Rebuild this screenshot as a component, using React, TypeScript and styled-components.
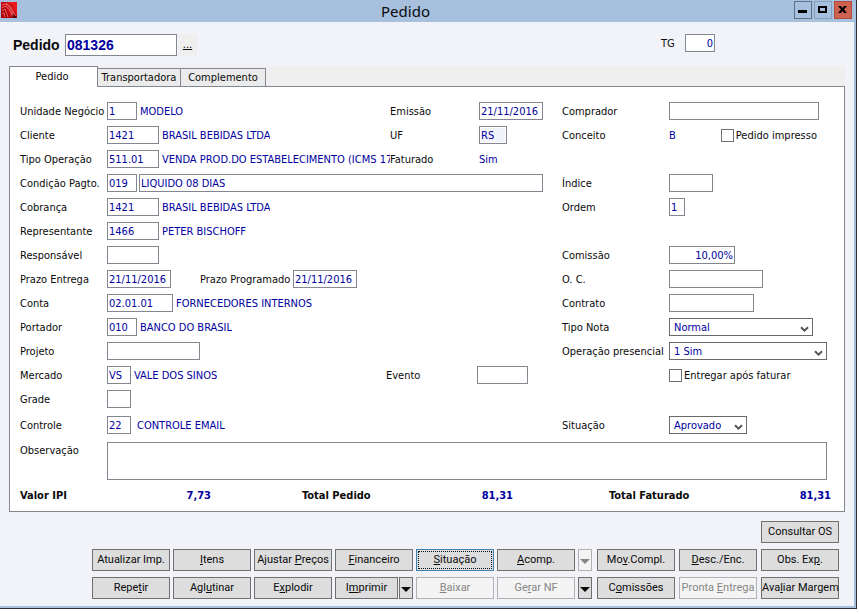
import React from "react";
import styled, { createGlobalStyle, css } from "styled-components";

const INK = "#0a0a0a";
const NAVY = "#0000a0";
const BORDER = "#838790";
const FACE = "#f2f3f9";
const FRAME = "#a6c0dd";
const UI = '"DejaVu Sans Condensed", "Open Sans", sans-serif';

const Global = createGlobalStyle`
  * { box-sizing: border-box; }
  body { margin: 0; background: #fff; color: ${INK}; font: 11px/14px ${UI}; }
  input, select, textarea, button { font: inherit; color: inherit; margin: 0; border-radius: 0; }
`;

const Window = styled.main`
  margin: 0 2px 5px 0;
  background: ${FACE};
  border-right: 1px solid #2e2f3a;
  border-bottom: 1px solid #2e2f3a;
`;
const Frame = styled.div`
  border-right: 2px solid ${FRAME};
  border-bottom: 2px solid ${FRAME};
`;
const TitleBar = styled.header`
  display: flex;
  align-items: flex-start;
  height: 22px;
  padding: 1px 2px 0 0;
  background: ${FRAME};
`;
const AppIcon = styled.svg`
  display: block;
  width: 16px;
  height: 16px;
  margin: 1px 0 0 1px;
`;
const Title = styled.h1`
  flex: 1;
  margin: 0;
  font: 400 15px/20px "Noto Sans", "Open Sans", sans-serif;
  text-align: center;
`;
const Controls = styled.div`
  display: flex;
  gap: 2px;
`;
const ControlButton = styled.button<{ $edge: string; $fill?: string }>`
  width: 18px;
  height: 18px;
  padding: 0;
  border: 1px solid ${(p) => p.$edge};
  background: ${(p) => p.$fill ?? "transparent"};
  svg { display: block; }
`;

const Body = styled.div`
  padding: 12px 9px 7px 9px;
`;
const Heading = styled.div`
  display: flex;
  align-items: flex-start;
  padding: 0 130px 0 4px;
`;
const HeadingLabel = styled.label`
  width: 52px;
  font: 700 14px/22px "Liberation Sans", sans-serif;
`;
const TgLabel = styled.label`
  margin-left: auto;
  width: 24px;
  line-height: 20px;
`;
const MoreButton = styled.button`
  width: 19px;
  height: 22px;
  margin-left: 1px;
  padding: 0;
  border: 0;
  background: #efefef;
  text-decoration: underline;
`;

const TabStrip = styled.div`
  display: flex;
  align-items: flex-end;
  height: 21px;
  margin-top: 10px;
  background: #efefef;
`;
const Tab = styled.button<{ $active?: boolean; $width: number }>`
  width: ${(p) => p.$width}px;
  height: 19px;
  padding: 1px 0 0;
  border: 1px solid ${BORDER};
  border-left-width: ${(p) => (p.$active ? 1 : 0)}px;
  background: #ebebeb;
  ${(p) =>
    p.$active &&
    css`
      height: 21px;
      padding: 0 3px 0 0;
      border-bottom: 0;
      background: #fff;
    `}
`;
const Panel = styled.section`
  padding: 15px 0 8px 10px;
  border: 1px solid ${BORDER};
  border-top: 0;
  background: #fff;
`;
const PanelTop = styled.div`
  flex: 1;
  align-self: flex-end;
  border-top: 1px solid ${BORDER};
`;

const Rows = styled.div`
  display: flex;
  flex-direction: column;
  gap: 6px;
`;
const Row = styled.div<{ $first?: number; $gap?: number }>`
  display: grid;
  grid-template-columns: ${(p) => p.$first ?? 370}px minmax(0, 1fr) 282px;
  margin-top: ${(p) => p.$gap ?? 0}px;
`;
const Cell = styled.div<{ $span?: number }>`
  display: flex;
  align-items: center;
  min-width: 0;
  height: 18px;
  grid-column: span ${(p) => p.$span ?? 1};
`;
const Label = styled.label<{ $width?: number; $indent?: number }>`
  flex: none;
  width: ${(p) => p.$width ?? 87}px;
  margin-left: ${(p) => p.$indent ?? 0}px;
  padding-top: 2px;
  white-space: nowrap;
`;
const Input = styled.input<{ $width?: number; $tall?: boolean; $right?: boolean }>`
  flex: ${(p) => (p.$width ? "none" : "1")};
  width: ${(p) => p.$width ?? 0}px;
  height: 18px;
  padding: 0 1px;
  border: 1px solid ${BORDER};
  background: #fff;
  color: ${NAVY};
  text-align: ${(p) => (p.$right ? "right" : "left")};
  outline: none;
  &:read-only {
    background: ${FACE};
    box-shadow: inset 0 0 0 1px #fff;
  }
  ${(p) =>
    p.$tall &&
    css`
      height: 22px;
      font: 700 14px/20px "Liberation Sans", sans-serif;
    `}
`;
const LongInput = styled(Input)`
  margin: 0 19px 0 2px;
`;
const Value = styled.output<{ $gap?: number }>`
  margin-left: ${(p) => p.$gap ?? 3}px;
  padding-top: 2px;
  overflow: hidden;
  color: ${NAVY};
  white-space: nowrap;
`;
const Check = styled.label<{ $indent?: number }>`
  display: flex;
  align-items: center;
  gap: 2px;
  margin-left: ${(p) => p.$indent ?? 0}px;
  white-space: nowrap;
  input {
    appearance: none;
    width: 13px;
    height: 13px;
    border: 1px solid #6f6f6f;
    background: #fff;
  }
  span { padding-top: 2px; }
`;
const SelectBox = styled.div<{ $width: number }>`
  display: grid;
  width: ${(p) => p.$width}px;
  select, svg { grid-area: 1 / 1; }
  select {
    appearance: none;
    width: 100%;
    height: 18px;
    padding: 2px 16px 0 4px;
    border: 1px solid #6a6a6a;
    background: #fff;
    color: ${NAVY};
  }
  svg {
    place-self: center end;
    margin: 4px 4px 0 0;
    pointer-events: none;
  }
`;
const NoteRow = styled.div`
  display: flex;
  align-items: flex-start;
  margin-top: 2px;
  padding-right: 17px;
`;
const Note = styled.textarea`
  flex: 1;
  height: 38px;
  border: 1px solid ${BORDER};
  color: ${NAVY};
  resize: none;
`;
const Totals = styled.dl`
  display: grid;
  grid-template-columns: 282fr 307fr 222fr;
  margin: 9px 13px 0 0;
  font-weight: 700;
`;
const Total = styled.div<{ $after?: number }>`
  display: flex;
  justify-content: space-between;
  padding-right: ${(p) => p.$after ?? 0}px;
  dd { margin: 0; color: ${NAVY}; }
`;

const Actions = styled.footer`
  display: flex;
  justify-content: flex-end;
  align-items: flex-end;
  gap: 5px;
  margin-top: 9px;
  padding-right: 6px;
`;
const LeftActions = styled.div`
  display: grid;
  grid-template-columns: repeat(6, 78px) 14px;
  gap: 6px 3px;
`;
const RightActions = styled.div`
  display: grid;
  grid-template-columns: repeat(3, 78px);
  gap: 6px 4px;
`;
const ActionButton = styled.button<{ $focused?: boolean; $column?: number }>`
  height: 22px;
  padding: 0;
  border: 1px solid #707070;
  background: #dddddd;
  font: 11px/18px Roboto, "Liberation Sans", sans-serif;
  white-space: nowrap;
  ${(p) => p.$column && `grid-column: ${p.$column};`}
  &:disabled {
    border-color: #b0b2b5;
    background: #f4f4f4;
    color: #868686;
  }
  ${(p) =>
    p.$focused &&
    css`
      border-color: #3c7fb1;
      outline: 1px dotted #111;
      outline-offset: -3px;
    `}
  svg { display: block; margin: 2px auto 0; }
`;
const Split = styled.div`
  display: grid;
  grid-template-columns: 1fr 14px;
  gap: 1px;
`;

const Chevron = () => (
  <svg width="9" height="7" viewBox="0 0 9 7" aria-hidden="true">
    <path d="M1 1.2 4.5 4.7 8 1.2" fill="none" stroke="#555" strokeWidth="2" />
  </svg>
);
const Arrow = () => (
  <svg width="10" height="5" viewBox="0 0 10 5" aria-hidden="true">
    <path d="M0 0h10L5 5z" fill="currentColor" />
  </svg>
);

type FieldProps = {
  id: string;
  label: string;
  width: number;
  value?: string;
  labelWidth?: number;
  right?: boolean;
  readOnly?: boolean;
};
const Field = ({ id, label, width, value = "", labelWidth, right, readOnly }: FieldProps) => (
  <>
    <Label htmlFor={id} $width={labelWidth}>{label}</Label>
    <Input id={id} $width={width} defaultValue={value} $right={right} readOnly={readOnly} />
  </>
);

const SIDE = 107;
const Choice = ({ id, label, width, options }: { id: string; label: string; width: number; options: string[] }) => (
  <>
    <Label htmlFor={id} $width={SIDE}>{label}</Label>
    <SelectBox $width={width}>
      <select id={id}>{options.map((o) => <option key={o}>{o}</option>)}</select>
      <Chevron />
    </SelectBox>
  </>
);

const Action = ({ text, ...rest }: { text: string; disabled?: boolean; $focused?: boolean; $column?: number }) => {
  const [before, key, after] = text.split("_");
  return (
    <ActionButton type="button" {...rest}>
      {before}{key && <u>{key}</u>}{after}
    </ActionButton>
  );
};

export default function App() {
  return (
    <Window>
      <Global />
      <Frame>
        <TitleBar>
          <AppIcon viewBox="0 0 16 16" aria-hidden="true">
            <path d="M0 0h16v16H0z" fill="#c9070c" />
            <path d="M6 0h10v13L11 3z" fill="#e8191d" />
            <path d="M0 8 4 4l2 5 4 7H0z" fill="#b00208" />
            <path d="M1 3 5 2l4 4 4 8M1 6l4-2 4 5 3 6M5 1l5 4 3 6 2 4M1 9l3-2 3 8M1 12l2-1 1 4" fill="none" stroke="#f7aaa2" strokeWidth=".6" />
            <path d="M12 12l4 3v1h-5z" fill="#5e0004" />
          </AppIcon>
          <Title>Pedido</Title>
          <Controls>
            <ControlButton type="button" aria-label="Minimizar" $edge="#5d7288">
              <svg width="16" height="16" viewBox="0 0 16 16"><path d="M3 8h9v3H3z" /></svg>
            </ControlButton>
            <ControlButton type="button" aria-label="Maximizar" $edge="#86a0ba">
              <svg width="16" height="16" viewBox="0 0 16 16"><path d="M3 4h9v7H3zM5 6v3h5V6z" fillRule="evenodd" /></svg>
            </ControlButton>
            <ControlButton type="button" aria-label="Fechar" $edge="#b5483c" $fill="#cd6250">
              <svg width="16" height="16" viewBox="0 0 16 16"><path d="M3 4h3l1.500 2L9 4h3L9 7.500l3 3.500H9L7.500 9 6 11H3l3-3.500z" /></svg>
            </ControlButton>
          </Controls>
        </TitleBar>
        <Body>
          <Heading>
            <HeadingLabel htmlFor="numero">Pedido</HeadingLabel>
            <Input id="numero" $width={112} $tall defaultValue="081326" />
            <MoreButton type="button">...</MoreButton>
            <TgLabel htmlFor="tg">TG</TgLabel>
            <Input id="tg" $width={30} $right defaultValue="0" />
          </Heading>
          <TabStrip role="tablist">
            <Tab type="button" role="tab" aria-selected $active $width={89}>Pedido</Tab>
            <Tab type="button" role="tab" $width={83}>Transportadora</Tab>
            <Tab type="button" role="tab" $width={85}>Complemento</Tab>
            <PanelTop />
          </TabStrip>
          <Panel>
            <Rows>
              <Row>
                <Cell><Field id="unidade" label="Unidade Negócio" width={30} value="1" /><Value>MODELO</Value></Cell>
                <Cell><Field id="emissao" label="Emissão" labelWidth={89} width={64} value="21/11/2016" /></Cell>
                <Cell><Field id="comprador" label="Comprador" labelWidth={SIDE} width={150} /></Cell>
              </Row>
              <Row>
                <Cell><Field id="cliente" label="Cliente" width={52} value="1421" /><Value>BRASIL BEBIDAS LTDA</Value></Cell>
                <Cell><Field id="uf" label="UF" labelWidth={89} width={28} value="RS" readOnly /></Cell>
                <Cell>
                  <Label as="span" $width={SIDE}>Conceito</Label><Value $gap={0}>B</Value>
                  <Check $indent={45}><input type="checkbox" /><span>Pedido impresso</span></Check>
                </Cell>
              </Row>
              <Row>
                <Cell><Field id="tipo" label="Tipo Operação" width={52} value="511.01" /><Value>VENDA PROD.DO ESTABELECIMENTO (ICMS 17</Value></Cell>
                <Cell><Label as="span" $width={89}>Faturado</Label><Value $gap={0}>Sim</Value></Cell>
              </Row>
              <Row>
                <Cell $span={2}>
                  <Field id="condicao" label="Condição Pagto." width={30} value="019" />
                  <LongInput aria-label="Descrição da condição" defaultValue="LIQUIDO 08 DIAS" />
                </Cell>
                <Cell><Field id="indice" label="Índice" labelWidth={SIDE} width={44} /></Cell>
              </Row>
              <Row>
                <Cell $span={2}><Field id="cobranca" label="Cobrança" width={52} value="1421" /><Value>BRASIL BEBIDAS LTDA</Value></Cell>
                <Cell><Field id="ordem" label="Ordem" labelWidth={SIDE} width={16} value="1" /></Cell>
              </Row>
              <Row>
                <Cell><Field id="representante" label="Representante" width={52} value="1466" /><Value>PETER BISCHOFF</Value></Cell>
              </Row>
              <Row>
                <Cell $span={2}><Field id="responsavel" label="Responsável" width={52} /></Cell>
                <Cell><Field id="comissao" label="Comissão" labelWidth={SIDE} width={66} value="10,00%" right /></Cell>
              </Row>
              <Row>
                <Cell $span={2}>
                  <Field id="entrega" label="Prazo Entrega" width={64} value="21/11/2016" />
                  <Label htmlFor="programado" $indent={29} $width={93}>Prazo Programado</Label>
                  <Input id="programado" $width={64} defaultValue="21/11/2016" />
                </Cell>
                <Cell><Field id="oc" label="O. C." labelWidth={SIDE} width={94} /></Cell>
              </Row>
              <Row>
                <Cell $span={2}><Field id="conta" label="Conta" width={66} value="02.01.01" /><Value>FORNECEDORES INTERNOS</Value></Cell>
                <Cell><Field id="contrato" label="Contrato" labelWidth={SIDE} width={85} /></Cell>
              </Row>
              <Row>
                <Cell $span={2}><Field id="portador" label="Portador" width={30} value="010" /><Value>BANCO DO BRASIL</Value></Cell>
                <Cell><Choice id="nota" label="Tipo Nota" width={144} options={["Normal"]} /></Cell>
              </Row>
              <Row>
                <Cell $span={2}><Field id="projeto" label="Projeto" width={93} /></Cell>
                <Cell><Choice id="presencial" label="Operação presencial" width={158} options={["1 Sim"]} /></Cell>
              </Row>
              <Row $first={366}>
                <Cell><Field id="mercado" label="Mercado" width={24} value="VS" /><Value>VALE DOS SINOS</Value></Cell>
                <Cell><Field id="evento" label="Evento" labelWidth={91} width={51} /></Cell>
                <Cell><Check $indent={SIDE}><input type="checkbox" /><span>Entregar após faturar</span></Check></Cell>
              </Row>
              <Row>
                <Cell><Field id="grade" label="Grade" width={24} /></Cell>
              </Row>
              <Row $gap={2}>
                <Cell $span={2}><Field id="controle" label="Controle" width={24} value="22" /><Value $gap={6}>CONTROLE EMAIL</Value></Cell>
                <Cell><Choice id="situacao" label="Situação" width={78} options={["Aprovado"]} /></Cell>
              </Row>
              <NoteRow>
                <Label htmlFor="observacao">Observação</Label>
                <Note id="observacao" />
              </NoteRow>
            </Rows>
            <Totals>
              <Total $after={91}><dt>Valor IPI</dt><dd>7,73</dd></Total>
              <Total $after={96}><dt>Total Pedido</dt><dd>81,31</dd></Total>
              <Total><dt>Total Faturado</dt><dd>81,31</dd></Total>
            </Totals>
          </Panel>
          <Actions>
            <LeftActions>
              <Action text="Atualizar Imp." />
              <Action text="_I_tens" />
              <Action text="Ajustar _P_reços" />
              <Action text="_F_inanceiro" />
              <Action text="_S_ituação" $focused />
              <Action text="_A_comp." />
              <ActionButton type="button" aria-label="Opções de acompanhamento" disabled><Arrow /></ActionButton>
              <Action text="Repe_t_ir" />
              <Action text="Agl_u_tinar" />
              <Action text="E_x_plodir" />
              <Split>
                <Action text="I_m_primir" />
                <ActionButton type="button" aria-label="Opções de impressão"><Arrow /></ActionButton>
              </Split>
              <Action text="_B_aixar" disabled />
              <Action text="Ge_r_ar NF" disabled />
              <ActionButton type="button" aria-label="Opções de nota fiscal"><Arrow /></ActionButton>
            </LeftActions>
            <RightActions>
              <Action text="Consultar OS" $column={3} />
              <Action text="Mo_v_.Compl." />
              <Action text="_D_esc./Enc." />
              <Action text="Obs. Ex_p_." />
              <Action text="C_o_missões" />
              <Action text="Pronta _E_ntrega" disabled />
              <Action text="Ava_l_iar Margem" />
            </RightActions>
          </Actions>
        </Body>
      </Frame>
    </Window>
  );
}
